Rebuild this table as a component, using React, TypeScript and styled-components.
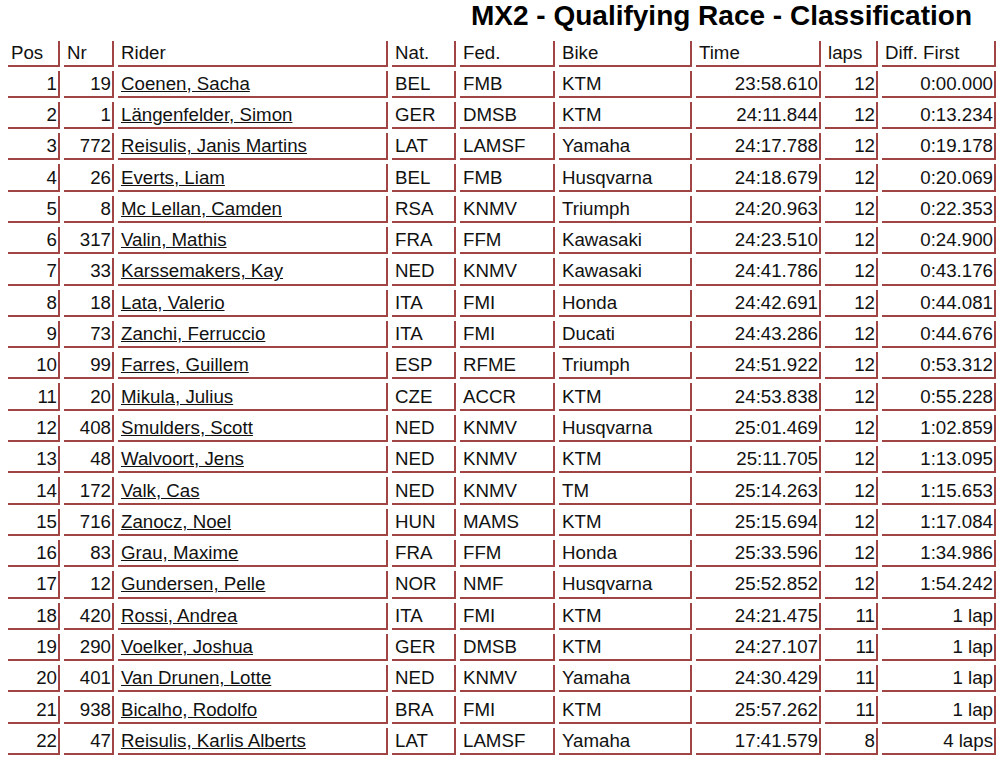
import React from 'react';
import styled, { createGlobalStyle } from 'styled-components';

type Result = [number, number, string, string, string, string, string, number, string];

const RESULTS: Result[] = [
  [1, 19, 'Coenen, Sacha', 'BEL', 'FMB', 'KTM', '23:58.610', 12, '0:00.000'],
  [2, 1, 'Längenfelder, Simon', 'GER', 'DMSB', 'KTM', '24:11.844', 12, '0:13.234'],
  [3, 772, 'Reisulis, Janis Martins', 'LAT', 'LAMSF', 'Yamaha', '24:17.788', 12, '0:19.178'],
  [4, 26, 'Everts, Liam', 'BEL', 'FMB', 'Husqvarna', '24:18.679', 12, '0:20.069'],
  [5, 8, 'Mc Lellan, Camden', 'RSA', 'KNMV', 'Triumph', '24:20.963', 12, '0:22.353'],
  [6, 317, 'Valin, Mathis', 'FRA', 'FFM', 'Kawasaki', '24:23.510', 12, '0:24.900'],
  [7, 33, 'Karssemakers, Kay', 'NED', 'KNMV', 'Kawasaki', '24:41.786', 12, '0:43.176'],
  [8, 18, 'Lata, Valerio', 'ITA', 'FMI', 'Honda', '24:42.691', 12, '0:44.081'],
  [9, 73, 'Zanchi, Ferruccio', 'ITA', 'FMI', 'Ducati', '24:43.286', 12, '0:44.676'],
  [10, 99, 'Farres, Guillem', 'ESP', 'RFME', 'Triumph', '24:51.922', 12, '0:53.312'],
  [11, 20, 'Mikula, Julius', 'CZE', 'ACCR', 'KTM', '24:53.838', 12, '0:55.228'],
  [12, 408, 'Smulders, Scott', 'NED', 'KNMV', 'Husqvarna', '25:01.469', 12, '1:02.859'],
  [13, 48, 'Walvoort, Jens', 'NED', 'KNMV', 'KTM', '25:11.705', 12, '1:13.095'],
  [14, 172, 'Valk, Cas', 'NED', 'KNMV', 'TM', '25:14.263', 12, '1:15.653'],
  [15, 716, 'Zanocz, Noel', 'HUN', 'MAMS', 'KTM', '25:15.694', 12, '1:17.084'],
  [16, 83, 'Grau, Maxime', 'FRA', 'FFM', 'Honda', '25:33.596', 12, '1:34.986'],
  [17, 12, 'Gundersen, Pelle', 'NOR', 'NMF', 'Husqvarna', '25:52.852', 12, '1:54.242'],
  [18, 420, 'Rossi, Andrea', 'ITA', 'FMI', 'KTM', '24:21.475', 11, '1 lap'],
  [19, 290, 'Voelker, Joshua', 'GER', 'DMSB', 'KTM', '24:27.107', 11, '1 lap'],
  [20, 401, 'Van Drunen, Lotte', 'NED', 'KNMV', 'Yamaha', '24:30.429', 11, '1 lap'],
  [21, 938, 'Bicalho, Rodolfo', 'BRA', 'FMI', 'KTM', '25:57.262', 11, '1 lap'],
  [22, 47, 'Reisulis, Karlis Alberts', 'LAT', 'LAMSF', 'Yamaha', '17:41.579', 8, '4 laps'],
];

const COLUMNS = [
  { label: 'Pos', width: 52 },
  { label: 'Nr', width: 50 },
  { label: 'Rider', width: 270 },
  { label: 'Nat.', width: 64 },
  { label: 'Fed.', width: 95 },
  { label: 'Bike', width: 133 },
  { label: 'Time', width: 125 },
  { label: 'laps', width: 53 },
  { label: 'Diff. First', width: 114 },
];

const GlobalStyle = createGlobalStyle`
  html, body {
    margin: 0;
    padding: 0;
    background: #ffffff;
  }
  body {
    font-family: "Liberation Sans", Arial, sans-serif;
    color: #111111;
  }
`;

const Page = styled.div`
  width: 1000px;
  height: 759px;
  overflow: hidden;
`;

const Title = styled.h2`
  margin: 0;
  padding-right: 28px;
  text-align: right;
  font-size: 28px;
  line-height: 31px;
  font-weight: bold;
  color: #000000;
`;

const Table = styled.table`
  margin: 6px 0 0 4px;
  border-collapse: separate;
  border-spacing: 4px 4px;
  table-layout: fixed;
  font-size: 18.7px;
`;

const HeadCell = styled.th`
  box-sizing: border-box;
  height: 25.5px;
  padding: 0 2px 0 3px;
  text-align: left;
  font-weight: normal;
  white-space: nowrap;
  border-right: 2px solid #a04444;
  border-bottom: 2px solid #a04444;
  line-height: 22px;
`;

const Cell = styled.td<{ $right?: boolean }>`
  box-sizing: border-box;
  height: 27.3px;
  padding: 1px 1px 0 3px;
  text-align: ${(p) => (p.$right ? 'right' : 'left')};
  white-space: nowrap;
  border-right: 2px solid #a04444;
  border-bottom: 2px solid #a04444;
  line-height: 22px;
  vertical-align: middle;
`;

const RiderLink = styled.a`
  color: #111111;
  text-decoration: underline;
`;

const App = () => {
  return (
    <Page>
      <GlobalStyle />
      <Title>MX2 - Qualifying Race - Classification</Title>
      <Table>
        <colgroup>
          {COLUMNS.map((c) => (
            <col key={c.label} style={{ width: c.width }} />
          ))}
        </colgroup>
        <thead>
          <tr>
            {COLUMNS.map((c) => (
              <HeadCell key={c.label}>{c.label}</HeadCell>
            ))}
          </tr>
        </thead>
        <tbody>
          {RESULTS.map(([pos, nr, rider, nat, fed, bike, time, laps, diff]) => (
            <tr key={pos}>
              <Cell $right>{pos}</Cell>
              <Cell $right>{nr}</Cell>
              <Cell>
                <RiderLink href="#">{rider}</RiderLink>
              </Cell>
              <Cell>{nat}</Cell>
              <Cell>{fed}</Cell>
              <Cell>{bike}</Cell>
              <Cell $right>{time}</Cell>
              <Cell $right>{laps}</Cell>
              <Cell $right>{diff}</Cell>
            </tr>
          ))}
        </tbody>
      </Table>
    </Page>
  );
};

export default App;
